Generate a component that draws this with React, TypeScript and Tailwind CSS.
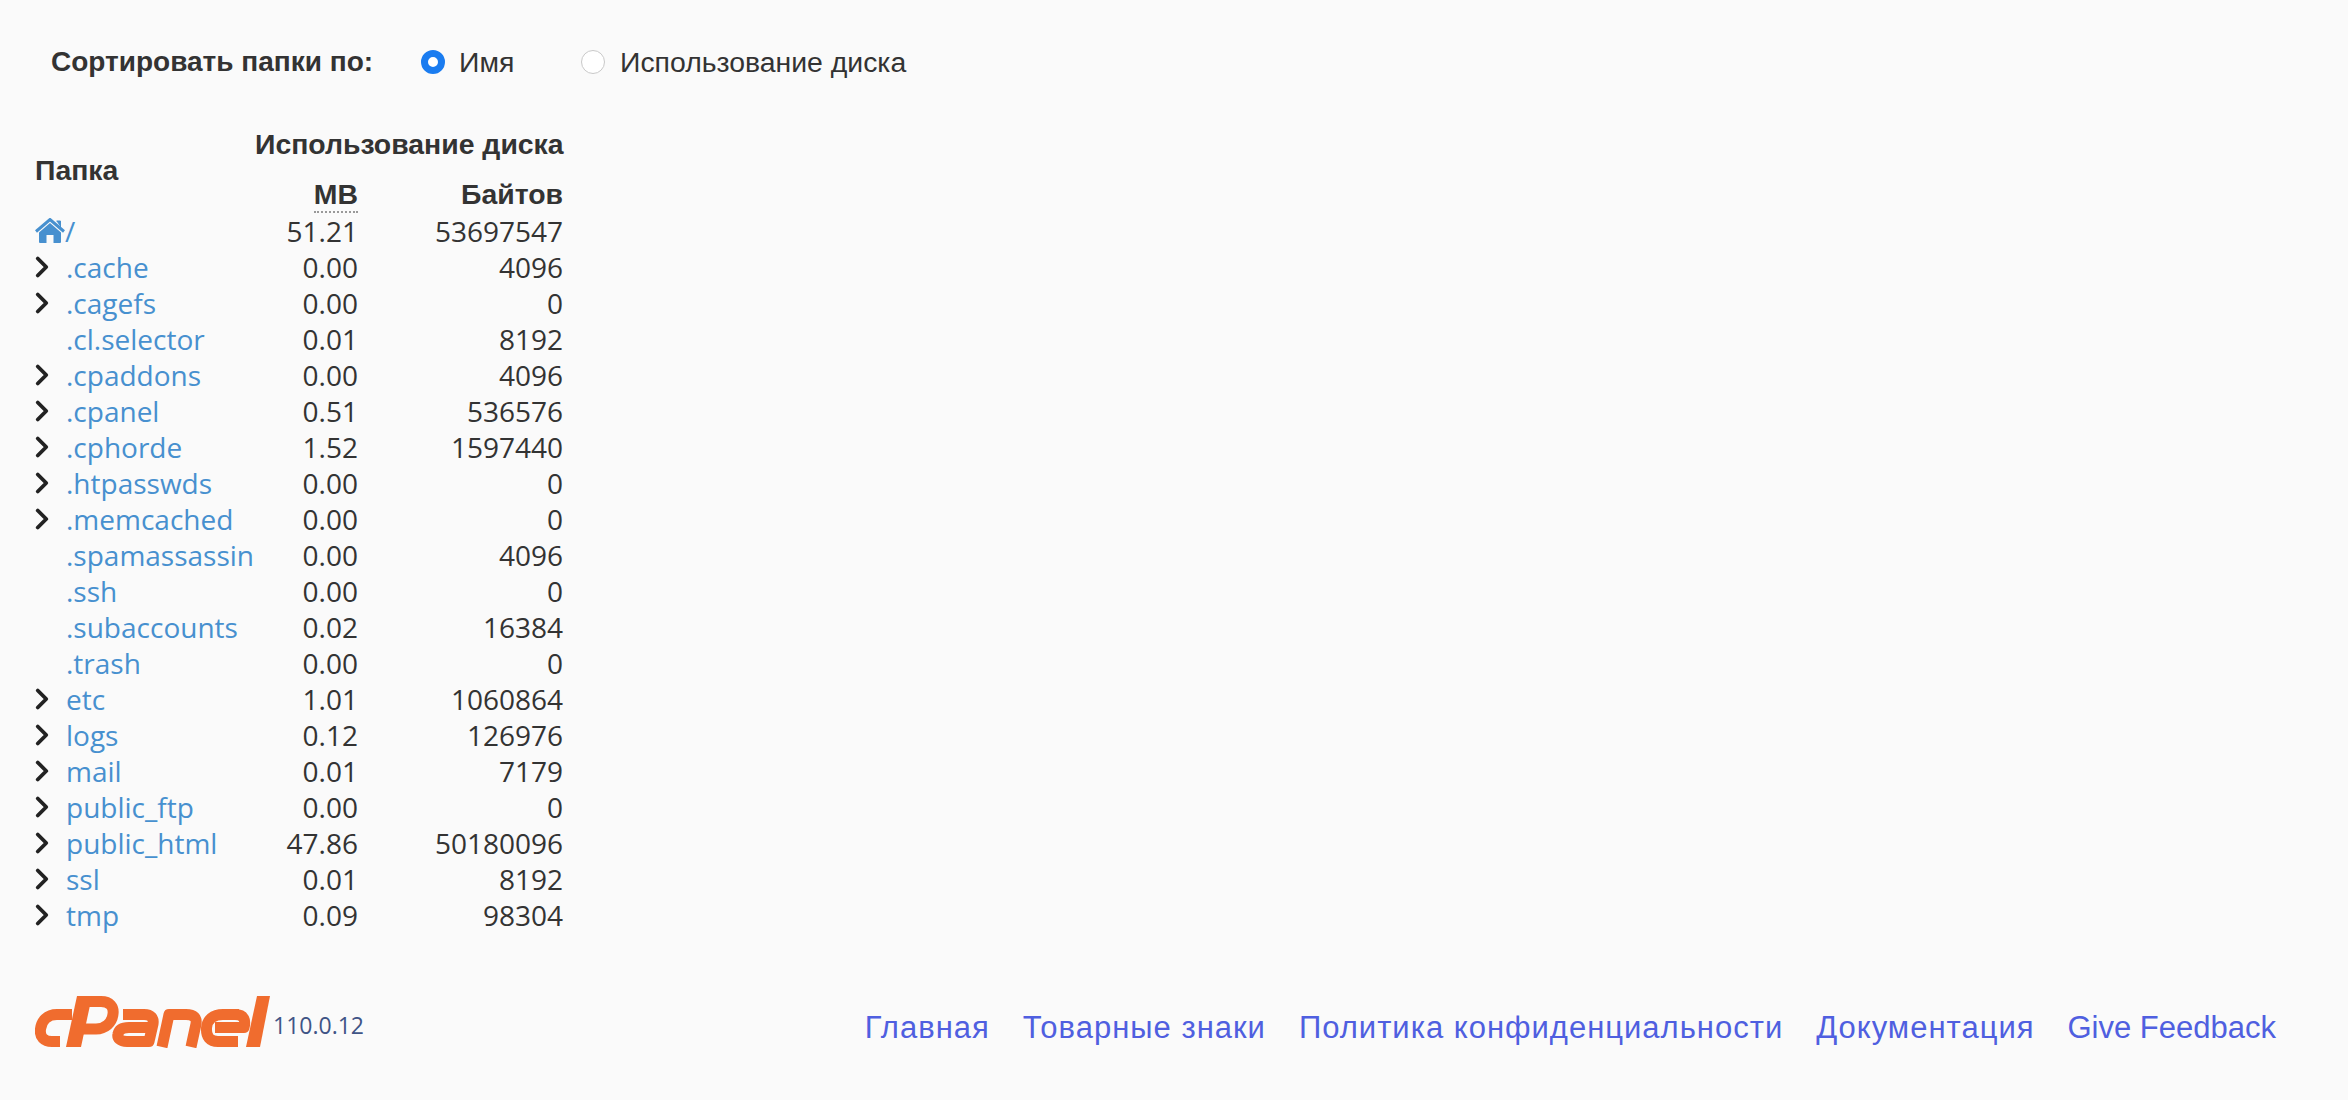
import { ChevronRight } from "lucide-react";

const ROWS: { name: string; mb: string; bytes: string; open?: boolean }[] = [
  { name: ".cache", mb: "0.00", bytes: "4096", open: true },
  { name: ".cagefs", mb: "0.00", bytes: "0", open: true },
  { name: ".cl.selector", mb: "0.01", bytes: "8192" },
  { name: ".cpaddons", mb: "0.00", bytes: "4096", open: true },
  { name: ".cpanel", mb: "0.51", bytes: "536576", open: true },
  { name: ".cphorde", mb: "1.52", bytes: "1597440", open: true },
  { name: ".htpasswds", mb: "0.00", bytes: "0", open: true },
  { name: ".memcached", mb: "0.00", bytes: "0", open: true },
  { name: ".spamassassin", mb: "0.00", bytes: "4096" },
  { name: ".ssh", mb: "0.00", bytes: "0" },
  { name: ".subaccounts", mb: "0.02", bytes: "16384" },
  { name: ".trash", mb: "0.00", bytes: "0" },
  { name: "etc", mb: "1.01", bytes: "1060864", open: true },
  { name: "logs", mb: "0.12", bytes: "126976", open: true },
  { name: "mail", mb: "0.01", bytes: "7179", open: true },
  { name: "public_ftp", mb: "0.00", bytes: "0", open: true },
  { name: "public_html", mb: "47.86", bytes: "50180096", open: true },
  { name: "ssl", mb: "0.01", bytes: "8192", open: true },
  { name: "tmp", mb: "0.09", bytes: "98304", open: true },
];

const LINKS = ["Главная", "Товарные знаки", "Политика конфиденциальности", "Документация"];

function HomeIcon() {
  return (
    <svg width="30" height="26" viewBox="0 0 30 26" className="shrink-0">
      <path d="M15 5 L4 14.5 V24 a1 1 0 0 0 1 1 H11.5 V17 H18.5 V25 H25 a1 1 0 0 0 1-1 V14.5 Z" fill="#4790cf" />
      <path d="M1 13.5 L15 1.5 L29 13.5" fill="none" stroke="#4790cf" strokeWidth="3" />
      <path d="M21.5 3 H25.5 V9" fill="#4790cf" stroke="#4790cf" strokeWidth="1" />
    </svg>
  );
}

function CpanelLogo() {
  return (
    <svg width="235" height="52" viewBox="0 0 235 52" className="shrink-0">
      <g fill="none" stroke="#f06c2e" strokeWidth="11" strokeLinejoin="round" strokeLinecap="butt">
        {/* c */}
        <path d="M37 18.5 H22 C12 18.5 6.500 25 5.500 33 C4.500 41 9 45.500 17 45.500 H25" />
        {/* P */}
        <path d="M46 5.500 H66 C75 5.500 79 11 78 18 C77 27 70 33 61 33 H48" />
        {/* a */}
        <path d="M88 18.500 H109 C116 18.500 119 22 118 28 L114 45.500 H92 C85 45.500 82 42 83 38 C84 33 88 31.500 94 31.500 H114" />
        {/* n */}
        <path d="M127 51 L134 18.500 H151 C159 18.500 162 22 161 28 L156 51" />
        {/* e */}
        <path d="M207 31.500 H180 M204 18.500 H188 C178 18.500 172 24 171.500 32 C171 41 175 45.500 183 45.500 H203" />
        <path d="M200 18.500 C209 18.500 211 24 209 31.500 H196" />
      </g>
      {/* P stem */}
      <path d="M42 0 H57 L46 51 H31 Z" fill="#f06c2e" />
      {/* l */}
      <path d="M222 0 H235 L225 51 H211 Z" fill="#f06c2e" />
    </svg>
  );
}

export default function App() {
  return (
    <div className="min-h-[1100px] bg-[#fafafa] pt-[44px] pl-[35px] pr-[72px] font-['Liberation_Sans',Arial,sans-serif] text-[28.4px] text-[#333]">
      <div className="flex items-center h-[36px] pl-[16px]">
        <span className="font-bold text-[28px] w-[370px] whitespace-nowrap">Сортировать папки по:</span>
        <span className="w-[24px] h-[24px] rounded-full bg-white border-[7px] border-[#1a7cf0]" />
        <span className="ml-[14px] w-[122px]">Имя</span>
        <span className="w-[24px] h-[24px] rounded-full bg-white border border-[#c9c9c9]" />
        <span className="ml-[15px]">Использование диска</span>
      </div>

      <table className="mt-[42px] border-collapse table-fixed w-[528px]">
        <colgroup>
          <col className="w-[220px]" />
          <col className="w-[103px]" />
          <col className="w-[205px]" />
        </colgroup>
        <thead>
          <tr className="h-[44px]">
            <th rowSpan={2} className="p-0 pt-[5px] text-left font-bold align-middle">Папка</th>
            <th colSpan={2} className="p-0 text-right font-bold whitespace-nowrap">Использование диска</th>
          </tr>
          <tr className="h-[47px]">
            <th className="p-0 pt-[11px] text-right font-bold align-top leading-[34px]">
              <span className="inline-block align-top border-b-2 border-dotted border-[#999] leading-[34px]">MB</span>
            </th>
            <th className="p-0 pt-[11px] text-right font-bold align-top leading-[34px]">Байтов</th>
          </tr>
        </thead>
        <tbody className="font-['Open_Sans',sans-serif] text-[28px] leading-[36px]">
          <tr className="h-[36px]">
            <td className="p-0">
              <a className="flex items-center text-[#4790cf]">
                <HomeIcon />/
              </a>
            </td>
            <td className="p-0 text-right">51.21</td>
            <td className="p-0 text-right">53697547</td>
          </tr>
          {ROWS.map((r) => (
            <tr key={r.name} className="h-[36px]">
              <td className="p-0 whitespace-nowrap">
                <div className="flex items-center">
                  <span className="w-[31px] h-[34px] shrink-0">
                    {r.open && <ChevronRight size={34} strokeWidth={2.7} className="text-[#222] -ml-[10px]" />}
                  </span>
                  <a className="text-[#4790cf]">{r.name}</a>
                </div>
              </td>
              <td className="p-0 text-right">{r.mb}</td>
              <td className="p-0 text-right">{r.bytes}</td>
            </tr>
          ))}
        </tbody>
      </table>

      <div className="mt-[63px] flex items-center justify-between">
        <div className="flex items-end">
          <CpanelLogo />
          <span className="ml-[3px] mb-[6px] font-['Open_Sans',sans-serif] font-medium text-[23px] text-[#3f5486]">110.0.12</span>
        </div>
        <div className="mt-[11px] flex gap-[33px] text-[#4f5fe0] text-[31px] leading-[36px]">
          {LINKS.map((l) => (
            <a key={l} className="tracking-[1px]">{l}</a>
          ))}
          <a>Give Feedback</a>
        </div>
      </div>
    </div>
  );
}
